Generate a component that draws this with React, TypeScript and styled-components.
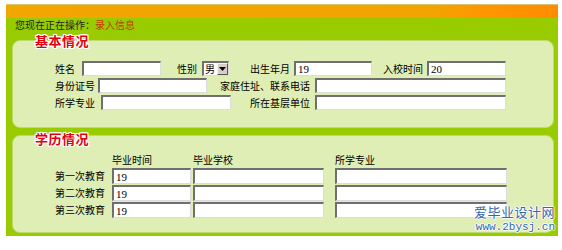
import React from 'react';
import styled, { createGlobalStyle } from 'styled-components';

const GlobalStyle = createGlobalStyle`
  html, body {
    margin: 0;
    padding: 0;
    background: #ffffff;
  }
  body {
    font-family: "Noto Sans CJK SC", "Noto Sans", sans-serif;
    font-size: 10px;
    color: #000;
  }
`;

// 학력 행 라벨
const educationRows = ['第一次教育', '第二次教育', '第三次教育'];

function App() {
  return (
    <>
      <GlobalStyle />
      <Frame>
        <TopBar />
        <GreenArea>
          <Status>
            您现在正在操作：<Current>录入信息</Current>
          </Status>

          <Section>
            <Title $overlap={9}>基本情况</Title>
            <Panel $pt={20} $pb={17}>
              <Row>
                <Label $mr={7}>姓名</Label>
                <Field $w={79} />
                <Label $ml={16} $mr={5}>性别</Label>
                <FakeSelect>
                  <span>男</span>
                  <SelectButton>
                    <svg width="7" height="4" viewBox="0 0 7 4">
                      <path d="M0 0h7L3.5 4z" fill="#000" />
                    </svg>
                  </SelectButton>
                </FakeSelect>
                <Label $ml={21} $mr={4}>出生年月</Label>
                <Field $w={78} defaultValue="19" />
                <Label $ml={11} $mr={4}>入校时间</Label>
                <Field $w={79} defaultValue="20" />
              </Row>
              <Row>
                <Label $mr={3}>身份证号</Label>
                <Field $w={109} />
                <Label $ml={13} $mr={5}>家庭住址、联系电话</Label>
                <Field $w={191} />
              </Row>
              <Row>
                <Label $mr={6}>所学专业</Label>
                <Field $w={130} />
                <Label $ml={19} $mr={5}>所在基层单位</Label>
                <Field $w={191} />
              </Row>
            </Panel>
          </Section>

          <Section $mt={3}>
            <Title $overlap={12}>学历情况</Title>
            <Panel $pt={17} $pb={14}>
              <EduGrid>
                <span />
                <HeadCell>毕业时间</HeadCell>
                <HeadCell>毕业学校</HeadCell>
                <HeadCell>所学专业</HeadCell>
                {educationRows.map((name) => (
                  <React.Fragment key={name}>
                    <RowLabel>{name}</RowLabel>
                    <Field $w={79} $h={16} defaultValue="19" />
                    <Field $w={131} $h={16} />
                    <Field $w={172} $h={16} />
                  </React.Fragment>
                ))}
              </EduGrid>
            </Panel>
          </Section>

          <Watermark>
            <WaterTitle>爱毕业设计网</WaterTitle>
            <WaterUrl>www.2bysj.cn</WaterUrl>
          </Watermark>
        </GreenArea>
      </Frame>
    </>
  );
}

const Frame = styled.div`
  position: relative;
  width: 552px;
  margin: 4px 0 0 6px;
`;

const TopBar = styled.div`
  height: 14px;
  border-top: 1px solid #d8c56a;
  box-sizing: border-box;
  background: linear-gradient(
    to right,
    #f2a600 0%,
    #f3a300 78%,
    #ff9600 86%,
    #ff8c00 100%
  );
`;

const GreenArea = styled.div`
  background: #99cc00;
  padding: 0 4px 3px 6px;
`;

const Status = styled.div`
  height: 13px;
  line-height: 13px;
  padding-left: 3px;
  color: #222;
`;

const Current = styled.span`
  color: #c03a00;
`;

const Section = styled.div<{ $mt?: number }>`
  display: flex;
  flex-direction: column;
  margin-top: ${(p) => p.$mt ?? 2}px;
`;

const Title = styled.div<{ $overlap: number }>`
  position: relative;
  z-index: 1;
  height: 16px;
  line-height: 16px;
  margin-bottom: -${(p) => p.$overlap}px;
  padding-left: 23px;
  font-size: 13px;
  font-weight: 700;
  color: #e4000f;
  letter-spacing: 0.5px;
  text-shadow: 1px 0 #fff, -1px 0 #fff, 0 1px #fff, 0 -1px #fff,
    1px 1px #fff, -1px -1px #fff, 1px -1px #fff, -1px 1px #fff;
`;

const Panel = styled.div<{ $pt: number; $pb: number }>`
  background: #dfeeb5;
  border: 1px solid #bcdc70;
  border-radius: 8px;
  padding: ${(p) => p.$pt}px 0 ${(p) => p.$pb}px 42px;
  display: flex;
  flex-direction: column;
  gap: 2px;
`;

const Row = styled.div`
  display: flex;
  align-items: center;
  height: 15px;
`;

const Label = styled.span<{ $ml?: number; $mr?: number }>`
  margin-left: ${(p) => p.$ml ?? 0}px;
  margin-right: ${(p) => p.$mr ?? 0}px;
  white-space: nowrap;
  line-height: 15px;
`;

const Field = styled.input<{ $w: number; $h?: number }>`
  box-sizing: border-box;
  width: ${(p) => p.$w}px;
  height: ${(p) => p.$h ?? 15}px;
  margin: 0;
  padding: 0 2px;
  background: #fff;
  border-top: 2px solid #6f6f6f;
  border-left: 2px solid #6f6f6f;
  border-right: 1px solid #dcdcdc;
  border-bottom: 1px solid #dcdcdc;
  font-family: "Liberation Serif", serif;
  font-size: 11px;
  color: #000;
  outline: none;
`;

const FakeSelect = styled.div`
  box-sizing: border-box;
  width: 27px;
  height: 15px;
  display: flex;
  align-items: center;
  justify-content: space-between;
  background: #fff;
  border-top: 2px solid #6f6f6f;
  border-left: 2px solid #6f6f6f;
  border-right: 1px solid #dcdcdc;
  border-bottom: 1px solid #dcdcdc;
  padding-left: 1px;
  line-height: 12px;
`;

const SelectButton = styled.span`
  box-sizing: border-box;
  width: 11px;
  height: 12px;
  display: flex;
  align-items: center;
  justify-content: center;
  background: #d4d0c8;
  border-top: 1px solid #f4f4f4;
  border-left: 1px solid #f4f4f4;
  border-right: 1px solid #555;
  border-bottom: 1px solid #555;
`;

const EduGrid = styled.div`
  display: grid;
  grid-template-columns: 57px 81px 142px 172px;
  grid-template-rows: 14px repeat(3, 16px);
  row-gap: 1px;
  align-items: center;
`;

const HeadCell = styled.span`
  line-height: 14px;
  white-space: nowrap;
`;

const RowLabel = styled.span`
  line-height: 16px;
  white-space: nowrap;
`;

const Watermark = styled.div`
  position: absolute;
  right: 3px;
  bottom: 2px;
  display: flex;
  flex-direction: column;
  align-items: flex-end;
  gap: 1px;
  color: #3466ae;
  text-shadow: 1px 0 #fff, -1px 0 #fff, 0 1px #fff, 0 -1px #fff;
`;

const WaterTitle = styled.span`
  font-size: 13px;
  line-height: 16px;
  height: 16px;
  letter-spacing: 0.5px;
`;

const WaterUrl = styled.span`
  font-family: "Liberation Mono", monospace;
  font-size: 11px;
  line-height: 13px;
  height: 13px;
`;

export default App;
